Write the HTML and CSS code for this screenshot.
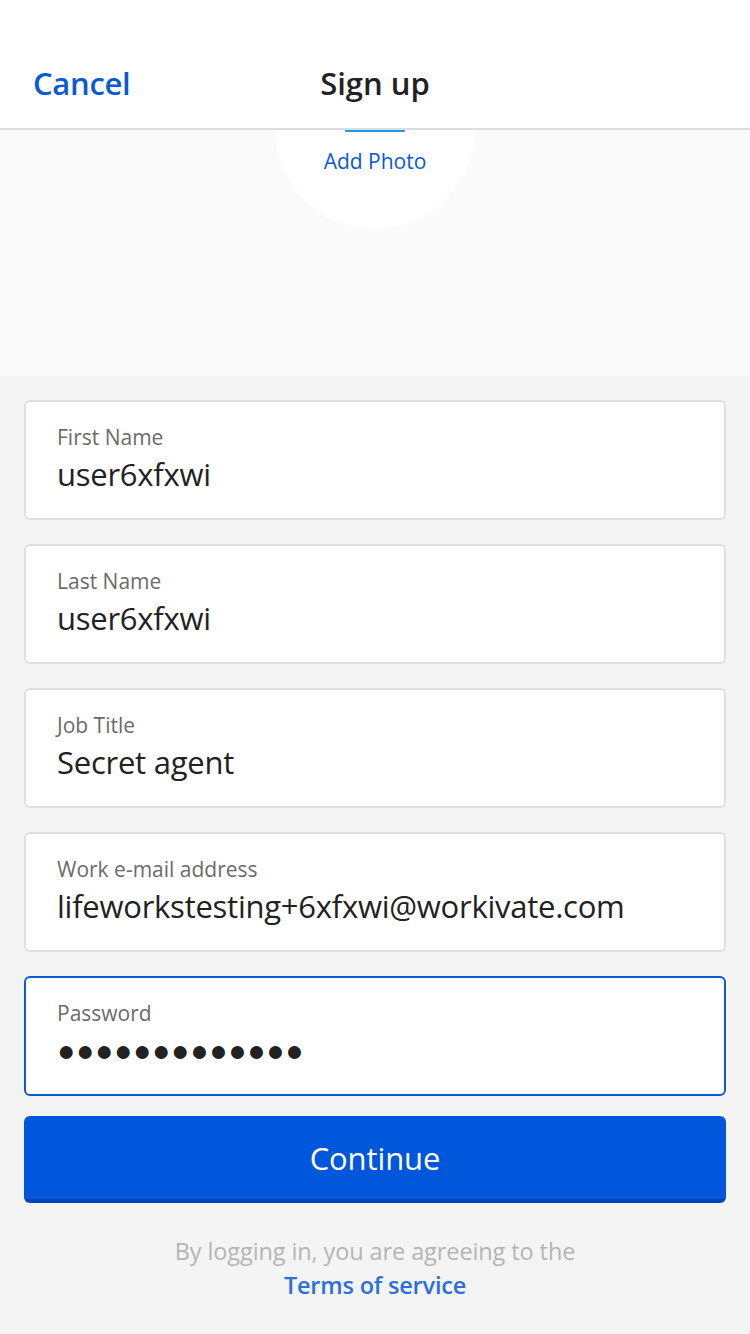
FILE: index.html
```html
<!DOCTYPE html>
<html>
<head>
<meta charset="utf-8">
<link rel="stylesheet" href="styles.css">
</head>
<body>
<div class="page">
  <header class="topbar">
    <span class="cancel">Cancel</span>
    <span class="title">Sign up</span>
    <span class="spacer"></span>
  </header>
  <section class="photo">
    <div class="circle">
      <div class="icon-bar"></div>
      <div class="add-photo">Add Photo</div>
    </div>
  </section>
  <main class="form">
    <div class="field">
      <div class="label">First Name</div>
      <div class="value">user6xfxwi</div>
    </div>
    <div class="field">
      <div class="label">Last Name</div>
      <div class="value">user6xfxwi</div>
    </div>
    <div class="field">
      <div class="label">Job Title</div>
      <div class="value">Secret agent</div>
    </div>
    <div class="field">
      <div class="label">Work e-mail address</div>
      <div class="value">lifeworkstesting+6xfxwi@workivate.com</div>
    </div>
    <div class="field focused">
      <div class="label">Password</div>
      <div class="value dots">●●●●●●●●●●●●●</div>
    </div>
    <button class="continue">Continue</button>
    <div class="legal">
      <div class="legal-text">By logging in, you are agreeing to the</div>
      <div class="terms">Terms of service</div>
    </div>
  </main>
</div>
</body>
</html>
```
FILE: styles.css
```css
* { box-sizing: border-box; }
html, body {
  margin: 0;
  padding: 0;
  background: #f4f4f4;
  font-family: "Open Sans", "Noto Sans", sans-serif;
}
.page {
  width: 750px;
  height: 1334px;
  overflow: hidden;
  background: #f4f4f4;
}
.topbar {
  position: relative;
  z-index: 2;
  height: 130px;
  background: #ffffff;
  border-bottom: 2px solid #dcdcdc;
  display: grid;
  grid-template-columns: 1fr auto 1fr;
  align-items: end;
  padding: 0 33px 25px 33px;
}
.cancel {
  justify-self: start;
  color: #0a5ad8;
  font-size: 31px;
  font-weight: 600;
  line-height: 40px;
  letter-spacing: -0.3px;
}
.title {
  color: #222222;
  font-size: 31px;
  font-weight: 600;
  line-height: 40px;
}
.photo {
  height: 246px;
  background: #fafafa;
  overflow: hidden;
  display: flex;
  justify-content: center;
}
.circle {
  width: 200px;
  height: 200px;
  margin-top: -101px;
  border-radius: 50%;
  background: #ffffff;
  display: flex;
  flex-direction: column;
  align-items: center;
}
.icon-bar {
  width: 60px;
  height: 3px;
  margin-top: 100px;
  background: #1a9ae8;
  border-radius: 2px;
}
.add-photo {
  margin-top: 14px;
  color: #0a5ad8;
  font-size: 21px;
  line-height: 30px;
}
.form {
  padding: 24px 24px 0;
  display: flex;
  flex-direction: column;
}
.field {
  height: 120px;
  background: #ffffff;
  border: 2px solid #dedede;
  border-radius: 6px;
  padding: 21px 0 0 31px;
  margin-bottom: 24px;
}
.field.focused {
  border-color: #0a5ad8;
  margin-bottom: 20px;
}
.label {
  color: #6b6b6b;
  font-size: 21px;
  line-height: 29px;
}
.value {
  color: #222222;
  font-size: 31px;
  line-height: 42px;
  margin-top: 1px;
  letter-spacing: -0.25px;
}
.value.dots {
  font-size: 30px;
  letter-spacing: 0.9px;
  line-height: 42px;
}
.continue {
  height: 87px;
  width: 100%;
  border: none;
  border-bottom: 4px solid #0046b8;
  border-radius: 6px;
  background: #0057dc;
  color: #ffffff;
  font-family: "Open Sans", "Noto Sans", sans-serif;
  font-size: 31px;
  padding: 0;
  letter-spacing: -0.1px;
}
.legal {
  margin-top: 31px;
  text-align: center;
}
.legal-text {
  color: #b5b5b5;
  font-size: 23.5px;
  line-height: 34px;
  letter-spacing: -0.1px;
}
.terms {
  color: #2b6fdf;
  font-size: 23.5px;
  font-weight: 600;
  line-height: 34px;
  letter-spacing: -0.2px;
}
```
